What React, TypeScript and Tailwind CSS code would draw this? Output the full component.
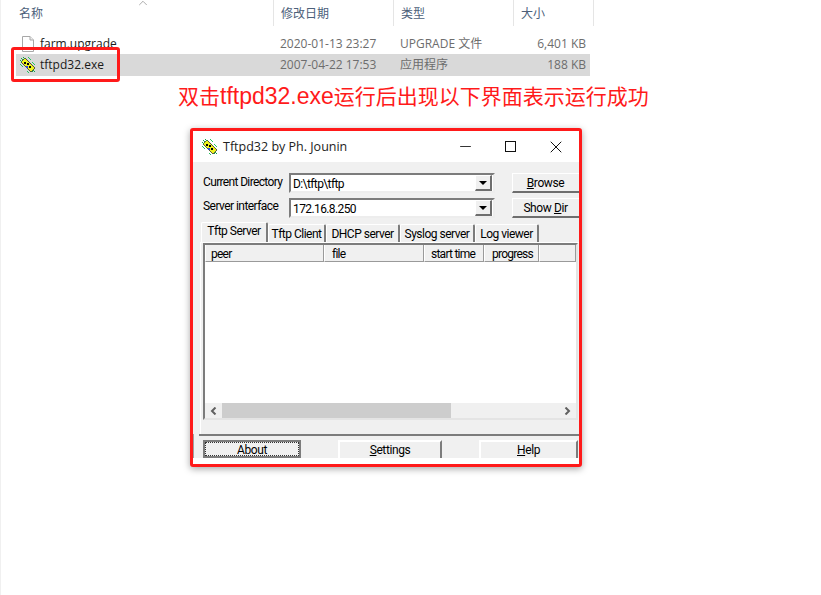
import React from 'react';
import { ChevronUp, Minus, X } from 'lucide-react';

const uiFont = 'font-["Open_Sans","Noto_Sans_CJK_SC",sans-serif]';
const winFont = 'font-["Roboto","Noto_Sans_CJK_SC",sans-serif] tracking-[-0.4px]';

function ChipIcon() {
  return <svg width="16" height="16" viewBox="0 0 16 16" className="shrink-0">
      <path d="M1 5 L5 1 L15 11 L11 15 Z" fill="#eef21e" stroke="#1a1a1a" strokeWidth=".7" />
      <path d="M1 1 L3 3 M3 0 L5 2 M0 3 L2 5 M12 15 L14 13 M14 15 L15 14" stroke="#16a34a" strokeWidth="1" />
      <path d="M0 7 L3 10 M7 14 L9 16 M8 0 L11 3 M12 5 L15 8" stroke="#22c55e" strokeWidth="1" />
      <rect x="4" y="5" width="2" height="2" fill="#000" />
      <rect x="7" y="6" width="2" height="2" fill="#000" />
      <rect x="9" y="9" width="2" height="2" fill="#000" />
      <rect x="6" y="9" width="2" height="2" fill="#2f4fd8" />
    </svg>;
}

function FileIcon() {
  return <svg width="14" height="16" viewBox="0 0 14 16" className="shrink-0 ml-[1px] mr-[1px]">
      <path d="M1.5 .5 H9 L12.5 4 V15.5 H1.5 Z" fill="#fff" stroke="#a8a8a8" />
      <path d="M9 .5 V4 H12.5" fill="#f0f0f0" stroke="#a8a8a8" />
    </svg>;
}

function HeaderCell({ label, width, pad = 'pl-[7px]' }: { label: string; width: string; pad?: string }) {
  return <div className={`${width} ${pad} h-[26px] pt-[2px] border-r border-[#e5e5e5] flex items-center text-[12px] text-[#4c607a]`}>
      {label}
    </div>;
}

function FileRow({ name, date, type, size, selected = false, icon }: { name: string; date: string; type: string; size: string; selected?: boolean; icon: React.ReactNode }) {
  return <div className={`flex items-center h-[22px] w-[574px] text-[12px] ${selected ? 'bg-[#d9d9d9]' : 'pt-[2px]'}`}>
      <div className="w-[257px] flex items-center gap-[4px] pl-[4px] text-[#1a1a1a]">
        {icon}
        <span>{name}</span>
      </div>
      <div className="w-[120px] pl-[7px] text-[#6d6d6d]">{date}</div>
      <div className="w-[120px] pl-[7px] text-[#6d6d6d]">{type}</div>
      <div className="w-[73px] text-right text-[#6d6d6d]">{size}</div>
    </div>;
}

function ComboBox({ value }: { value: string }) {
  return <div className="w-[206px] h-[20px] shrink-0 flex items-center bg-white border-2 border-[#7c7c7c] border-r-[#ededed] border-b-[#ededed] pl-[2px] pr-[1px] text-[12px] text-black">
      <span className="flex-1 pt-[2px] tracking-[-0.6px]">{value}</span>
      <div className="w-[17px] h-[16px] flex items-center justify-center bg-[#f0f0f0] border border-white border-r-2 border-b-2 border-r-[#6e6e6e] border-b-[#6e6e6e]">
        <div className="w-0 h-0 border-x-[4px] border-x-transparent border-t-[4px] border-t-black" />
      </div>
    </div>;
}

function SideButton({ children }: { children: React.ReactNode }) {
  return <button className="w-[70px] h-[20px] shrink-0 flex items-center justify-center bg-[#f0f0f0] border border-white border-r-[#6e6e6e] border-b-2 border-b-[#6e6e6e] text-[12px] text-black pr-[3px]">
      {children}
    </button>;
}

function Tab({ label, width, active = false }: { label: string; width: string; active?: boolean }) {
  return <div className={`${width} flex items-center justify-center whitespace-nowrap bg-[#f0f0f0] border-l border-t border-white border-r-2 border-r-[#7c7c7c] rounded-t-[2px] text-[12px] tracking-[-0.5px] text-black ${active ? 'h-[20px] pb-[3px]' : 'h-[18px]'}`}>
      {label}
    </div>;
}

function ColHead({ label, width, pad = 'pl-[6px]' }: { label: string; width: string; pad?: string }) {
  return <div className={`${width} ${pad} h-[17px] pt-[1px] flex items-center bg-[#f0f0f0] border-l border-white border-r border-r-[#9a9a9a] border-b border-b-[#9a9a9a] text-[12px] tracking-[-0.75px] text-black`}>
      {label}
    </div>;
}

function BottomButton({ children, width, focused = false }: { children: React.ReactNode; width: string; focused?: boolean }) {
  return <button className={`${width} h-[18px] flex items-center justify-center bg-[#f0f0f0] text-[12px] text-black ${focused ? 'border-2 border-[#7c7c7c]' : 'border-l-2 border-t-2 border-white border-r-2 border-r-[#7c7c7c]'}`}>
      {focused ? <span className="w-full h-full pt-[1px] flex items-center justify-center border border-dotted border-[#333]">{children}</span> : children}
    </button>;
}

export default function App() {
  return <div className="w-[821px] h-[595px] overflow-hidden bg-white border-l border-[#f0f0f0] relative">
      {/* explorer listing */}
      <div className={uiFont}>
        <div className="flex relative">
          <HeaderCell label="名称" width="w-[273px]" pad="pl-[18px]" />
          <HeaderCell label="修改日期" width="w-[120px]" />
          <HeaderCell label="类型" width="w-[120px]" />
          <HeaderCell label="大小" width="w-[80px]" />
          <ChevronUp className="absolute left-[135px] -top-[4px] text-[#8a8a8a]" size={14} strokeWidth={1.2} />
        </div>
        <div className="pl-[15px] pt-[6px]">
          <FileRow name="farm.upgrade" date="2020-01-13 23:27" type="UPGRADE 文件" size="6,401 KB" icon={<FileIcon />} />
          <FileRow name="tftpd32.exe" date="2007-04-22 17:53" type="应用程序" size="188 KB" selected icon={<ChipIcon />} />
        </div>
      </div>

      {/* annotation */}
      <div className="absolute left-[10px] top-[47px] w-[109px] h-[35px] border-[3px] border-[#ff1a1a] rounded-[3px]" />
      <div className={`${uiFont} h-[40px] pl-[177px] pt-[7px] text-[21px] leading-[27px] text-[#ff1a1a] whitespace-nowrap`}>
        双击<span className='font-["Liberation_Sans",sans-serif] text-[23px]'>tftpd32.exe</span>运行后出现以下界面表示运行成功
      </div>

      {/* tftpd32 window */}
      <div className={`ml-[189px] mt-[12px] w-[392px] h-[339px] border-[3px] border-[#ff1a1a] rounded-[3px] bg-white shadow-[0_2px_7px_rgba(0,0,0,0.35)] overflow-hidden ${winFont}`}>
        <div className="h-[31px] flex items-center bg-white pl-[9px]">
          <ChipIcon />
          <span className={`${uiFont} ml-[5px] pt-[1px] text-[12.5px] tracking-normal text-[#222]`}>Tftpd32 by Ph. Jounin</span>
          <div className="ml-auto flex items-center text-[#111]">
            <Minus size={17} strokeWidth={1.2} className="mr-[31px]" />
            <div className="w-[11px] h-[11px] border border-[#111] mr-[30px]" />
            <X size={20} strokeWidth={1.2} className="mr-[13px]" />
          </div>
        </div>

        <div className="h-[272px] bg-[#f0f0f0] pl-[10px] pt-[11px]">
          <div className="flex items-center h-[20px]">
            <div className="w-[86px] shrink-0 whitespace-nowrap text-[12px] tracking-[-0.65px] text-black -mt-[2px]">Current Directory</div>
            <ComboBox value="D:\tftp\tftp" />
            <div className="w-[17px] shrink-0" />
            <SideButton><span><span className="underline">B</span>rowse</span></SideButton>
          </div>
          <div className="flex items-center h-[20px] mt-[5px]">
            <div className="w-[86px] shrink-0 whitespace-nowrap text-[12px] tracking-[-0.55px] text-black -mt-[4px]">Server interface</div>
            <ComboBox value="172.16.8.250" />
            <div className="w-[17px] shrink-0" />
            <SideButton><span>Show <span className="underline">D</span>ir</span></SideButton>
          </div>

          <div className="flex items-end h-[20px] mt-[4px] -ml-[2px]">
            <Tab label="Tftp Server" width="w-[67px]" active />
            <Tab label="Tftp Client" width="w-[58px]" />
            <Tab label="DHCP server" width="w-[74px]" />
            <Tab label="Syslog server" width="w-[75px]" />
            <Tab label="Log viewer" width="w-[64px]" />
          </div>

          {/* panel */}
          <div className="-ml-[3px] h-[192px] border-l border-t border-white pl-[2px]">
            <div className="h-[177px] w-[375px] border-2 border-[#7c7c7c] border-r-[#e4e4e4] border-b-[#e4e4e4] bg-white flex flex-col">
              <div className="flex">
                <ColHead label="peer" width="w-[119px]" pad="pl-[5px]" />
                <ColHead label="file" width="w-[100px]" pad="pl-[7px]" />
                <ColHead label="start time" width="w-[60px]" />
                <ColHead label="progress" width="w-[55px]" pad="pl-[7px]" />
                <ColHead label="" width="flex-1" />
              </div>
              <div className="flex-1" />
              <div className="h-[15px] flex bg-[#f0f0f0]">
                <div className="w-[17px] flex items-center justify-center text-[#606060]">
                  <svg width="7" height="8" viewBox="0 0 7 8"><path d="M5.5 .5 L2 4 L5.5 7.5" fill="none" stroke="currentColor" strokeWidth="2" /></svg>
                </div>
                <div className="w-[229px] bg-[#cdcdcd]" />
                <div className="flex-1" />
                <div className="w-[17px] flex items-center justify-center text-[#606060]">
                  <svg width="7" height="8" viewBox="0 0 7 8"><path d="M1.5 .5 L5 4 L1.5 7.5" fill="none" stroke="currentColor" strokeWidth="2" /></svg>
                </div>
              </div>
            </div>
          </div>
        </div>

        {/* bottom buttons */}
        <div className="h-[24px] bg-[#f0f0f0] border-l border-[#a0a0a0] pl-[5px]">
          <div className="flex gap-[37px] border-t-2 border-[#7c7c7c] pt-[4px] pl-[4px]">
            <BottomButton width="w-[98px]" focused>About</BottomButton>
            <BottomButton width="w-[104px]"><span><span className="underline">S</span>ettings</span></BottomButton>
            <BottomButton width="w-[99px]"><span><span className="underline">H</span>elp</span></BottomButton>
          </div>
        </div>
      </div>
    </div>;
}
